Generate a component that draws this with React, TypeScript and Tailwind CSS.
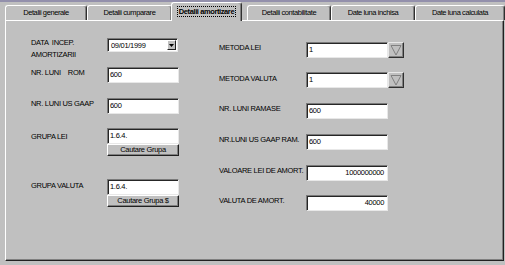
import clsx from "clsx";

const tabs = [
  { label: "Detalii generale", w: "w-[82px]" },
  { label: "Detalii cumparare", w: "w-[85px]" },
  { label: "Detalii amortizare", w: "w-[77px]", active: true },
  { label: "Detalii contabilitate", w: "w-[84px]" },
  { label: "Date luna inchisa", w: "w-[84px]" },
  { label: "Date luna calculata", w: "w-[90px]" },
];

const Field = ({ value, right, wide }: { value: string; right?: boolean; wide?: boolean }) => (
  <div
    className={clsx(
      "h-[16px] bg-white border-t border-l border-t-[#7a7a7a] border-l-[#7a7a7a] border-b border-r border-b-[#e8e8e8] border-r-[#e8e8e8] shadow-[inset_1px_1px_#262626] flex items-center text-[7.5px] tracking-[-0.3px] leading-none",
      wide ? "w-[82px]" : "w-[72px]",
      right ? "justify-end pr-[3px]" : "pl-[2px]"
    )}
  >
    {value}
  </div>
);

const RaisedButton = ({ label }: { label: string }) => (
  <div className="w-[72px] h-[12px] bg-[#c0c0c0] border-t border-l border-t-white border-l-white border-b border-r border-b-[#202020] border-r-[#202020] shadow-[inset_-1px_-1px_#808080] flex items-center justify-center text-[7.5px] tracking-[-0.3px] leading-none">
    {label}
  </div>
);

const DropButton = () => (
  <div className="w-[16px] h-[16px] bg-[#c0c0c0] border-t border-l border-t-[#e8e8e8] border-l-[#e8e8e8] border-b border-r border-b-[#303030] border-r-[#303030] shadow-[inset_-1px_-1px_#808080] flex items-center justify-center">
    <svg width="12" height="12" viewBox="0 0 12 12">
      <polygon points="1,1.5 11,1.5 6,11" fill="none" stroke="#808080" strokeWidth="1" />
    </svg>
  </div>
);

const DateCombo = () => (
  <div className="w-[71px] h-[14px] bg-white border-t border-l border-t-[#7a7a7a] border-l-[#7a7a7a] border-b border-r border-b-[#e8e8e8] border-r-[#e8e8e8] shadow-[inset_1px_1px_#262626] flex items-start justify-between text-[7.5px] tracking-[-0.3px] leading-none">
    <span className="pl-[3px] pt-[3px]">09/01/1999</span>
    <div className="mt-px mr-px w-[9px] h-[10px] bg-[#c0c0c0] border-t border-l border-t-white border-l-white border-b border-r border-b-[#202020] border-r-[#202020] flex items-center justify-center">
      <svg width="5" height="3" viewBox="0 0 5 3">
        <polygon points="0,0 5,0 2.5,3" fill="#000" />
      </svg>
    </div>
  </div>
);

const Label = ({ children, className }: { children: React.ReactNode; className?: string }) => (
  <div className={clsx("text-[7.5px] tracking-[-0.3px] leading-[10px] whitespace-pre", className)}>{children}</div>
);

export default function App() {
  return (
    <div className="w-[505px] h-[265px] bg-[#c0c0c0] overflow-hidden font-['Liberation_Sans',Arial,sans-serif] text-black">
      <div className="h-[2px] bg-[#9390ac]" />

      {/* tab strip */}
      <div className="flex items-end h-[18px] pl-[5px]">
        {tabs.map((t) =>
          t.active ? (
            <div
              key={t.label}
              className={clsx(
                t.w,
                "relative z-10 -ml-px mr-[5px] -mb-px h-[19px] bg-[#c0c0c0] border-t border-l border-t-white border-l-white border-r border-r-[#303030] rounded-t-[3px] shadow-[inset_-1px_0_#808080] flex items-start justify-center pt-[3px]"
              )}
            >
              <span className="border border-dotted border-black px-px text-[7.5px] font-bold tracking-[-0.4px] leading-[9px]">
                {t.label}
              </span>
            </div>
          ) : (
            <div
              key={t.label}
              className={clsx(
                t.w,
                "shrink-0 h-[15px] bg-[#c0c0c0] border-t border-l border-t-white border-l-white border-r border-r-[#303030] rounded-t-[3px] shadow-[inset_-1px_0_#808080] flex items-center justify-center text-[7.5px] tracking-[-0.4px] leading-none"
              )}
            >
              {t.label}
            </div>
          )
        )}
      </div>

      {/* panel */}
      <div className="ml-[5px] w-[499px] h-[241px] border-t border-l border-t-white border-l-white border-r border-b border-r-[#202020] border-b-[#202020] shadow-[inset_-1px_-1px_#808080] flex pl-[25px]">
        {/* left column */}
        <div className="w-[188px] pt-[17px] flex flex-col">
          <div className="h-[29px] flex items-start">
            <Label className="w-[76px] leading-[12px] -mt-[1px]">{"DATA  INCEP.\nAMORTIZARII"}</Label>
            <DateCombo />
          </div>
          <div className="h-[31px] flex items-start">
            <Label className="w-[76px] pt-[1px]">{"NR. LUNI    ROM"}</Label>
            <Field value="600" />
          </div>
          <div className="h-[30px] flex items-start">
            <Label className="w-[76px] pt-[1px]">NR. LUNI US GAAP</Label>
            <Field value="600" />
          </div>
          <div className="h-[51px] flex items-start">
            <Label className="w-[76px] pt-[4px]">GRUPA LEI</Label>
            <div className="flex flex-col">
              <Field value="1.6.4." />
              <RaisedButton label="Cautare Grupa" />
            </div>
          </div>
          <div className="flex items-start">
            <Label className="w-[76px] pt-[2px]">GRUPA VALUTA</Label>
            <div className="flex flex-col">
              <Field value="1.6.4." />
              <RaisedButton label="Cautare Grupa $" />
            </div>
          </div>
        </div>

        {/* right column */}
        <div className="pt-[21px] flex flex-col">
          <div className="h-[30px] flex items-start">
            <Label className="w-[87px] pt-[1px]">METODA LEI</Label>
            <Field value="1" wide />
            <DropButton />
          </div>
          <div className="h-[31px] flex items-start">
            <Label className="w-[87px] pt-[2px]">METODA VALUTA</Label>
            <Field value="1" wide />
            <DropButton />
          </div>
          <div className="h-[31px] flex items-start">
            <Label className="w-[87px] pt-[1px]">NR. LUNI RAMASE</Label>
            <Field value="600" wide />
          </div>
          <div className="h-[31px] flex items-start">
            <Label className="w-[87px] pt-[1px]">NR.LUNI US GAAP RAM.</Label>
            <Field value="600" wide />
          </div>
          <div className="h-[30px] flex items-start">
            <Label className="w-[87px] pt-[1px]">VALOARE LEI DE AMORT.</Label>
            <Field value="1000000000" right wide />
          </div>
          <div className="flex items-start">
            <Label className="w-[87px] pt-[1px]">VALUTA DE AMORT.</Label>
            <Field value="40000" right wide />
          </div>
        </div>
      </div>
    </div>
  );
}
